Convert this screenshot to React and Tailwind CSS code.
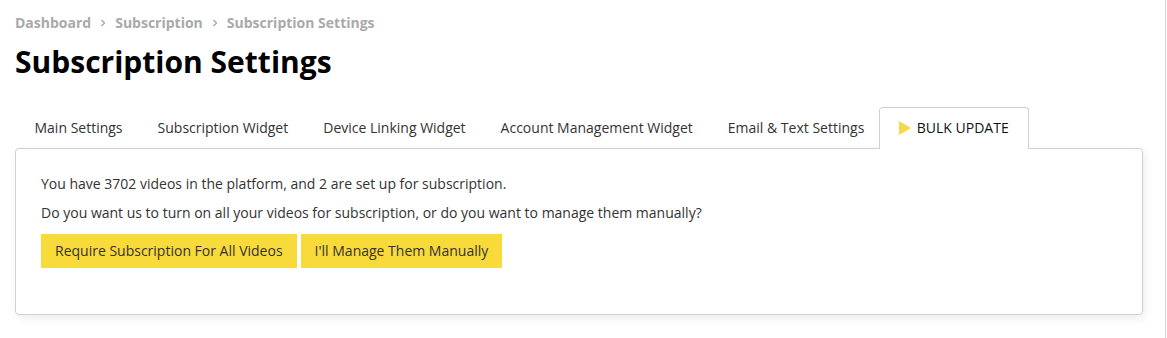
import React from "react";

const tabs = [
  "Main Settings",
  "Subscription Widget",
  "Device Linking Widget",
  "Account Management Widget",
  "Email & Text Settings",
];

const Chevron = () => (
  <svg width="8" height="10" viewBox="0 0 8 10" className="mx-[8px] inline-block">
    <path d="M2.5 2 L5.5 5 L2.5 8" fill="none" stroke="#a9a9a9" strokeWidth="1.4" />
  </svg>
);

const App = () => {
  return (
    <div className="h-[338px] w-full bg-white font-['Open_Sans',sans-serif] text-[#333]">
      <div className="h-full w-[1166px] border-r border-[#d4d4d4] pl-[15px] pr-[22px]">
        {/* Breadcrumb */}
        <nav className="flex items-center pt-[13px] text-[14px] font-bold leading-5 text-[#a9a9a9]">
          <span>Dashboard</span>
          <Chevron />
          <span>Subscription</span>
          <Chevron />
          <span>Subscription Settings</span>
        </nav>

        <h1 className="mt-[12px] text-[30px] font-bold leading-[34px] text-black">
          Subscription Settings
        </h1>

        {/* Tabs */}
        <div className="mt-[28px] flex items-end pl-[2px]">
          {tabs.map((t) => (
            <div key={t} className="px-[17.5px] py-[10px] text-[14px] leading-5 text-[#333]">
              {t}
            </div>
          ))}
          <div className="relative -mb-px -ml-[3px] flex items-center gap-[6px] rounded-t-[4px] border border-b-0 border-[#d0d0d0] bg-white px-[19px] pt-[10px] pb-[11px] text-[14px] font-medium uppercase leading-5 text-[#111]">
            <svg width="12" height="14" viewBox="0 0 12 14">
              <path d="M0 0 L12 7 L0 14 Z" fill="#f5d94a" />
            </svg>
            Bulk Update
          </div>
        </div>

        {/* Panel */}
        <div className="rounded-[4px] border border-[#d0d0d0] bg-white px-[25px] pt-[25px] pb-[27px] shadow-[2px_3px_8px_rgba(0,0,0,0.08)]">
          <p className="text-[14px] leading-5">
            You have 3702 videos in the platform, and 2 are set up for subscription.
          </p>
          <p className="mt-[9px] text-[14px] leading-5">
            Do you want us to turn on all your videos for subscription, or do you want to manage them manually?
          </p>
          <div className="mt-[11px] mb-[19px] flex gap-[4px]">
            <button className="h-[34px] bg-[#f8da3a] px-[14px] text-[14px] leading-5 text-[#333]">
              Require Subscription For All Videos
            </button>
            <button className="h-[34px] bg-[#f8da3a] px-[14px] text-[14px] leading-5 text-[#333]">
              I'll Manage Them Manually
            </button>
          </div>
        </div>
      </div>
    </div>
  );
};

export default App;
